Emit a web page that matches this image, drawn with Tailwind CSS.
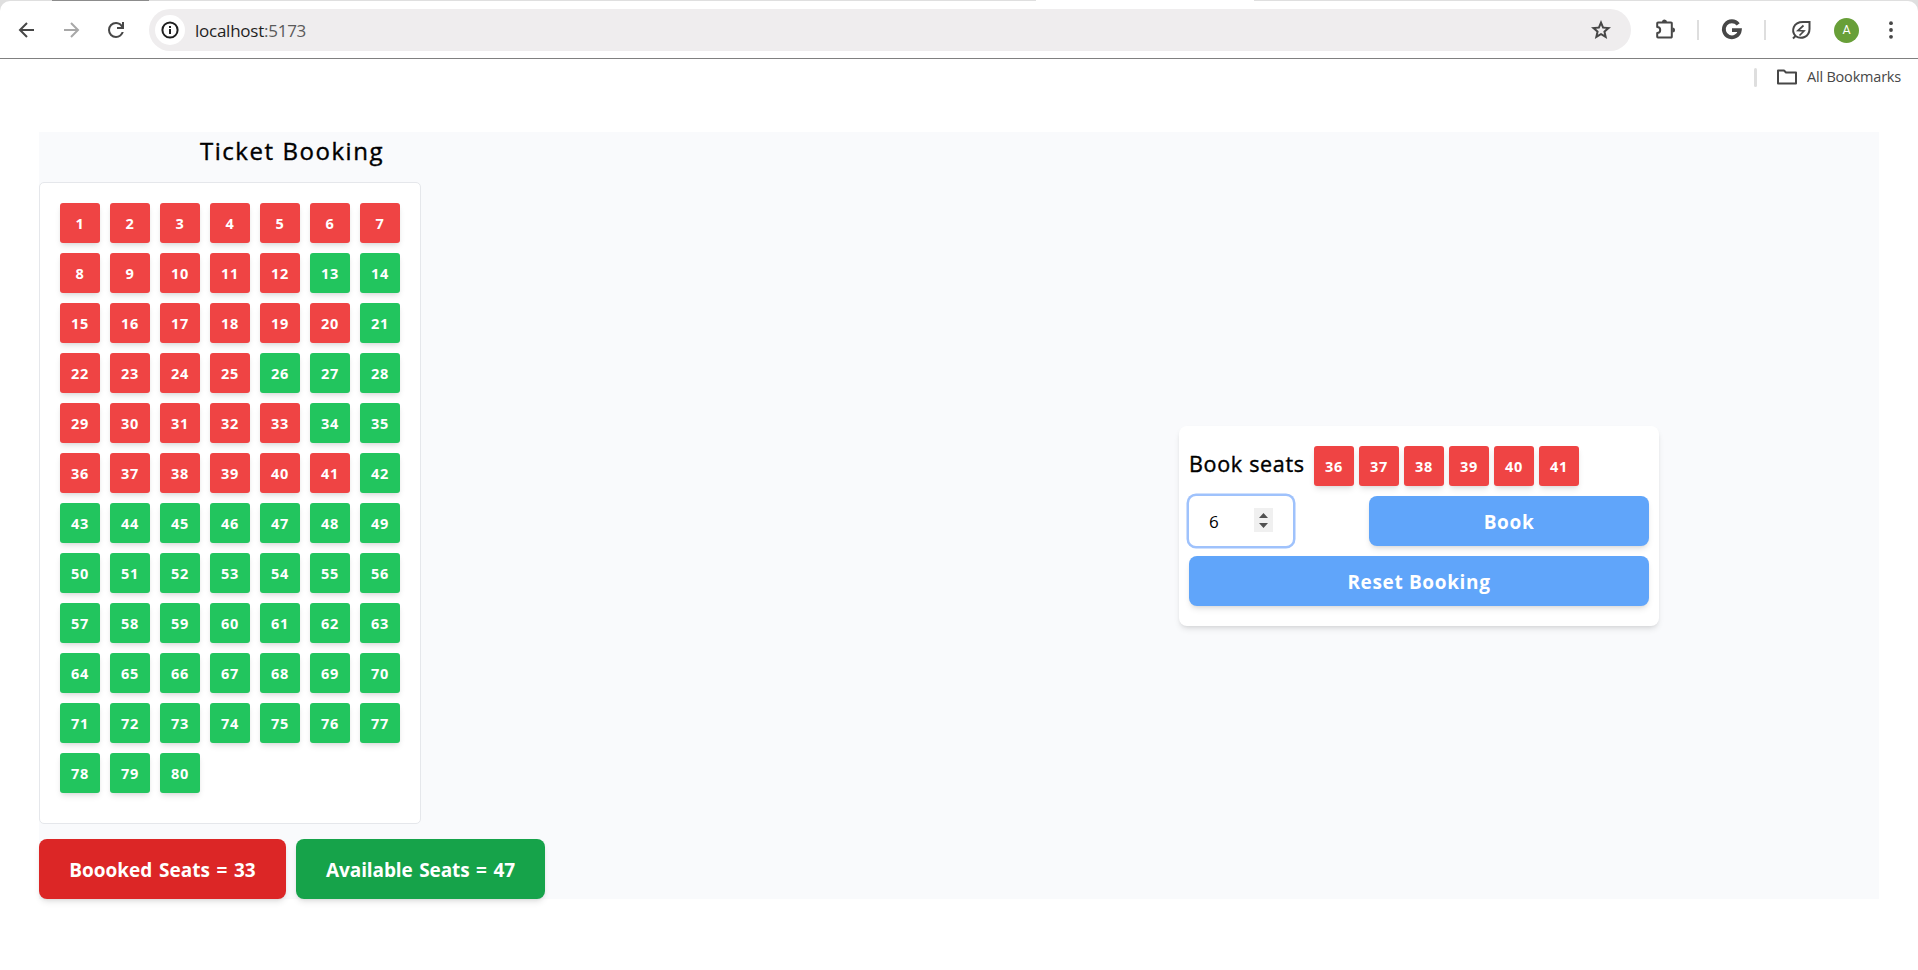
<!DOCTYPE html>
<html lang="en">
<head>
<meta charset="utf-8">
<title>Ticket Booking</title>
<script src="https://cdn.jsdelivr.net/npm/@tailwindcss/browser@4"></script>
</head>
<body class="bg-white font-['Open_Sans',sans-serif] text-black w-[1918px] h-[970px] overflow-hidden">
<header class="h-[59px] border-b border-[#808080] bg-[#dfdfdf]">
  <div class="flex h-px">
    <div class="w-[52px]"></div><div class="w-[97px] bg-[#8c8c8c]"></div><div class="w-[887px]"></div><div class="w-[218px] bg-white"></div>
  </div>
  <div class="flex h-[57px] items-center rounded-t-[10px] bg-white pt-px">
    <svg class="ml-[15px] size-6" viewBox="0 0 24 24" fill="none" stroke="#474747" stroke-width="2"><path d="M19 12H5M12 5l-7 7 7 7"/></svg>
    <svg class="ml-[20px] size-6" viewBox="0 0 24 24" fill="none" stroke="#a8a8a8" stroke-width="2"><path d="M5 12h14M12 5l7 7-7 7"/></svg>
    <svg class="ml-[21px] size-6" viewBox="0 0 24 24" fill="#474747"><path d="M12 20q-3.350 0-5.675-2.325T4 12t2.325-5.675T12 4q1.725 0 3.300.713T18 6.750V4h2v7h-7V9h4.200q-.8-1.400-2.188-2.200T12 6Q9.500 6 7.750 7.750T6 12t1.750 4.250T12 18q1.925 0 3.475-1.100T17.650 14h2.100q-.700 2.650-2.850 4.325T12 20"/></svg>
    <div class="ml-[21px] flex h-[42px] w-[1482px] items-center rounded-full bg-[#efedee] pl-[6px] pr-[18px]">
      <div class="flex size-[30px] items-center justify-center rounded-full bg-white"><svg class="size-[18px]" viewBox="0 0 18 18" fill="none" stroke="#1f1f1f" stroke-width="2"><circle cx="9" cy="9" r="7.600"/><path d="M9 8v5M9 5v2"/></svg></div>
      <span class="ml-[10px] pt-px text-[17px] tracking-[-0.25px] text-[#1f1f1f]">localhost<span class="text-[#5a5a5a]">:5173</span></span>
      <svg class="ml-auto size-6" viewBox="0 0 24 24" fill="#474747"><path d="m8.850 16.825 3.150-1.900 3.150 1.925-.825-3.600 2.775-2.400-3.650-.325-1.450-3.400-1.450 3.375-3.650.325 2.775 2.425zM5.825 21l1.625-7.025L2 9.250l7.200-.625L12 2l2.800 6.625 7.200.625-5.450 4.725L18.175 21 12 17.275z"/></svg>
    </div>
    <svg class="ml-[22px] size-6" viewBox="0 0 24 24"><path d="M5 4.500h13a.8.8 0 0 1 .8.8v13.400a.8.8 0 0 1-.8.8H5a.8.8 0 0 1-.8-.8V15a3 3 0 0 0 0-6V5.300a.8.8 0 0 1 .8-.8z" fill="none" stroke="#474747" stroke-width="2" stroke-linejoin="round"/><path d="M9 4a2.500 2.500 0 0 1 5 0zM19.500 9.500a2.500 2.500 0 0 1 0 5z" fill="#474747"/></svg>
    <div class="ml-[20px] h-5 w-[2px] bg-[#dedede]"></div>
    <svg class="ml-[22px] size-[22px]" viewBox="0 0 22 22" fill="none" stroke="#474747" stroke-width="3.800"><path d="M17.200 5.400A8 8 0 1 0 18.800 11.200H11"/></svg>
    <div class="ml-[21px] h-5 w-[2px] bg-[#dedede]"></div>
    <svg class="ml-[23px] size-6" viewBox="0 0 24 24" fill="none" stroke="#474747" stroke-width="2"><path d="M4 20.500l2.500-2.500C2 13 4 4 14 4h6.500v7C20.500 19 12 22 6.500 18"/><path d="M14.500 7.500l-5.500 5 6 .5-4.500 4.500" stroke-width="1.700"/></svg>
    <div class="ml-[21px] flex size-[25px] items-center justify-center rounded-full bg-[#689f38] text-[12.5px] text-white font-['Roboto',sans-serif]">A</div>
    <svg class="ml-[20px] size-6" viewBox="0 0 24 24" fill="#474747"><circle cx="12" cy="5.200" r="1.900"/><circle cx="12" cy="12" r="1.900"/><circle cx="12" cy="18.800" r="1.900"/></svg>
  </div>
</header>
<div class="flex h-[36px] items-center justify-end pr-[17px]">
  <div class="h-[19px] w-[3px] rounded-full bg-[#dedede]"></div>
  <svg class="ml-[19px] h-4 w-[22px]" viewBox="0 0 22 16" fill="none" stroke="#474747" stroke-width="2" stroke-linejoin="round"><path d="M2 1.500h6l2 2h10v11H2z"/></svg>
  <span class="ml-[9px] text-[14.5px] tracking-[-0.2px] text-[#474747]">All Bookmarks</span>
</div>
<main class="mx-[39px] mt-[37px] grid h-[767px] grid-cols-2 bg-[#f9fafc]">
  <section class="flex w-[506px] flex-col">
    <h1 class="h-[50px] text-center text-[24px] leading-[38px] tracking-[1.55px] [-webkit-text-stroke:0.4px_black]">Ticket Booking</h1>
    <div class="h-[642px] w-[382px] rounded-[5px] border border-gray-200 bg-white p-5">
      <div id="seats" class="grid grid-cols-7 gap-[10px]"></div>
    </div>
    <div class="mt-[15px] flex gap-[10px] text-[19px] font-bold text-white">
      <div class="flex h-[60px] w-[247px] items-center justify-center rounded-lg bg-[#dc2626] pt-[2px] shadow-md"><span class="whitespace-nowrap [word-spacing:1.7px]">Boooked Seats = 33</span></div>
      <div class="flex h-[60px] w-[249px] items-center justify-center rounded-lg bg-[#16a34a] pt-[2px] shadow-md"><span class="whitespace-nowrap tracking-[-0.1px] [word-spacing:1.7px]">Available Seats = 47</span></div>
    </div>
  </section>
  <section class="flex items-center justify-center pt-[21px]">
    <div class="flex h-[200px] w-[480px] flex-col gap-[10px] rounded-lg bg-white px-[10px] py-5 shadow-md">
      <div class="flex gap-[10px]">
        <h2 class="w-[115px] whitespace-nowrap text-[21.5px] leading-[36px] tracking-[0.7px] [-webkit-text-stroke:0.4px_black]">Book seats</h2>
        <div id="picked" class="flex gap-[5px]"></div>
      </div>
      <div class="flex justify-between">
        <div class="flex h-[50px] w-[104px] items-center justify-between rounded-[7px] bg-white pl-5 pr-[20px] text-[17px] ring-[2.5px] ring-[#9fc2fc]">
          <span class="pt-px">6</span>
          <svg class="mb-[2px] h-6 w-[19px]" viewBox="0 0 19 24"><path d="M0 0h19v24H0z" fill="#f0f0f0"/><path d="M9.500 5l4.500 5H5zM5 15h9l-4.500 5z" fill="#505050"/></svg>
        </div>
        <div class="flex h-[50px] w-[280px] items-center justify-center rounded-lg bg-[#60a5fa] pt-[2px] text-[19px] font-bold tracking-[0.65px] text-white shadow-md">Book</div>
      </div>
      <div class="flex h-[50px] items-center justify-center rounded-lg bg-[#60a5fa] pt-[2px] text-[19px] font-bold tracking-[0.65px] text-white shadow-md">Reset Booking</div>
    </div>
  </section>
</main>
<script>
const base = "flex size-10 items-center justify-center rounded-[3px] pt-px text-[14.5px] font-bold tracking-[0.7px] text-white shadow-md ";
const free = new Set([13, 14, 21, 26, 27, 28, 34, 35]);
const seat = n => `<div class="${base}${free.has(n) || n > 41 ? "bg-[#22c55e]" : "bg-[#ef4444]"}">${n}</div>`;
document.getElementById("seats").innerHTML = Array.from({length: 80}, (_, i) => seat(i + 1)).join("");
document.getElementById("picked").innerHTML = [36, 37, 38, 39, 40, 41].map(seat).join("");
</script>
</body>
</html>
